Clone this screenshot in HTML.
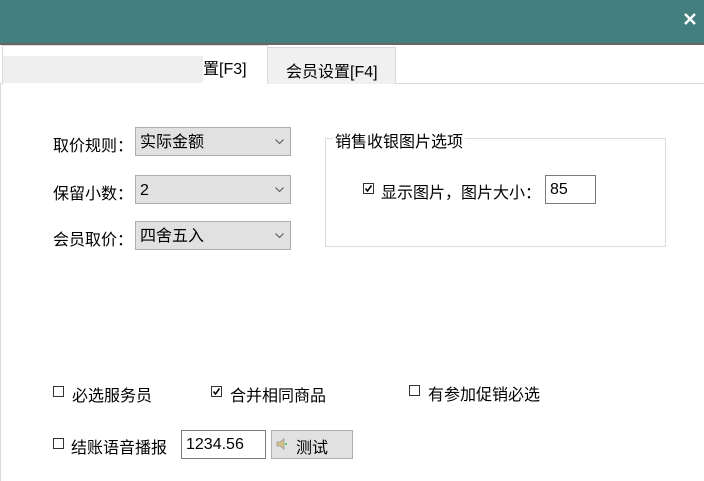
<!DOCTYPE html>
<html><head><meta charset="utf-8">
<style>
*{margin:0;padding:0;box-sizing:border-box}
body{width:704px;height:481px;background:#fff;position:relative;overflow:hidden;font-family:"Liberation Sans","Noto Sans CJK SC",sans-serif;font-size:16px;color:#000}
.a{position:absolute;white-space:nowrap}
.sel{position:absolute;background:#e1e1e1;border:1px solid #adadad;height:29px;padding-left:4px;line-height:29px}
.sel svg{position:absolute;right:6px;top:11px}
.cb{position:absolute;width:11px;height:11px;border:1px solid #333;background:#fff}
.inp{position:absolute;border:1px solid #7a7a7a;background:#fff;height:29px;line-height:28px;padding-left:4px}
</style></head><body>
<div class="a" style="left:0;top:0;width:704px;height:43px;background:#437f7e"></div>
<div class="a" style="left:0;top:43px;width:704px;height:2px;background:#666"></div>
<svg class="a" style="left:684px;top:13px" width="12" height="12"><path d="M1 1L11 11M11 1L1 11" stroke="#fff" stroke-width="2.4"/></svg>
<div class="a" style="left:0;top:83px;width:704px;height:1px;background:#d9d9d9"></div>
<div class="a" style="left:0;top:83px;width:1px;height:398px;background:#d9d9d9"></div>
<div class="a" style="left:2px;top:45px;width:266px;height:39px;background:#fff;border:1px solid #d9d9d9;border-bottom:none"></div>
<div class="a" style="left:3px;top:56px;width:200px;height:27px;background:#efefef"></div>
<div class="a" style="left:203px;top:55px">置[F3]</div>
<div class="a" style="left:267px;top:47px;width:129px;height:37px;background:#f0f0f0;border:1px solid #d9d9d9;border-bottom:none"></div>
<div class="a" style="left:286px;top:58px">会员设置[F4]</div>
<div class="a" style="left:53px;top:132px">取价规则：</div>
<div class="sel" style="left:135px;top:127px;width:156px">实际金额<svg width="9" height="6"><path d="M0.5 0.5L4.5 4.5L8.5 0.5" fill="none" stroke="#555"/></svg></div>
<div class="a" style="left:53px;top:180px">保留小数：</div>
<div class="sel" style="left:135px;top:175px;width:156px">2<svg width="9" height="6"><path d="M0.5 0.5L4.5 4.5L8.5 0.5" fill="none" stroke="#555"/></svg></div>
<div class="a" style="left:53px;top:226px">会员取价：</div>
<div class="sel" style="left:135px;top:221px;width:156px">四舍五入<svg width="9" height="6"><path d="M0.5 0.5L4.5 4.5L8.5 0.5" fill="none" stroke="#555"/></svg></div>
<div class="a" style="left:325px;top:138px;width:341px;height:109px;border:1px solid #dcdcdc"></div>
<div class="a" style="left:333px;top:128px;background:#fff;padding:0 2px">销售收银图片选项</div>
<div class="cb" style="left:363px;top:183px"></div>
<svg class="a" style="left:364px;top:184px" width="9" height="9"><path d="M1.5 4.5L3.5 7L7.5 1.5" fill="none" stroke="#000" stroke-width="1.5"/></svg>
<div class="a" style="left:381px;top:179px">显示图片，图片大小：</div>
<div class="inp" style="left:545px;top:175px;width:51px">85</div>
<div class="cb" style="left:53px;top:386px"></div>
<div class="a" style="left:72px;top:382px">必选服务员</div>
<div class="cb" style="left:211px;top:386px"></div>
<svg class="a" style="left:212px;top:387px" width="9" height="9"><path d="M1.5 4.5L3.5 7L7.5 1.5" fill="none" stroke="#000" stroke-width="1.5"/></svg>
<div class="a" style="left:230px;top:382px">合并相同商品</div>
<div class="cb" style="left:409px;top:385px"></div>
<div class="a" style="left:428px;top:381px">有参加促销必选</div>
<div class="cb" style="left:53px;top:438px"></div>
<div class="a" style="left:71px;top:434px">结账语音播报</div>
<div class="inp" style="left:181px;top:430px;width:85px">1234.56</div>
<div class="a" style="left:271px;top:430px;width:82px;height:29px;background:#e1e1e1;border:1px solid #adadad"></div>
<svg class="a" style="left:275px;top:436px" width="16" height="16"><path d="M2 6H5L9 3V13L5 10H2Z" fill="#d8c08a" stroke="#999" stroke-width="0.8"/><path d="M11 7V9" stroke="#6c6" stroke-width="2"/></svg>
<div class="a" style="left:296px;top:434px">测试</div>
</body></html>
